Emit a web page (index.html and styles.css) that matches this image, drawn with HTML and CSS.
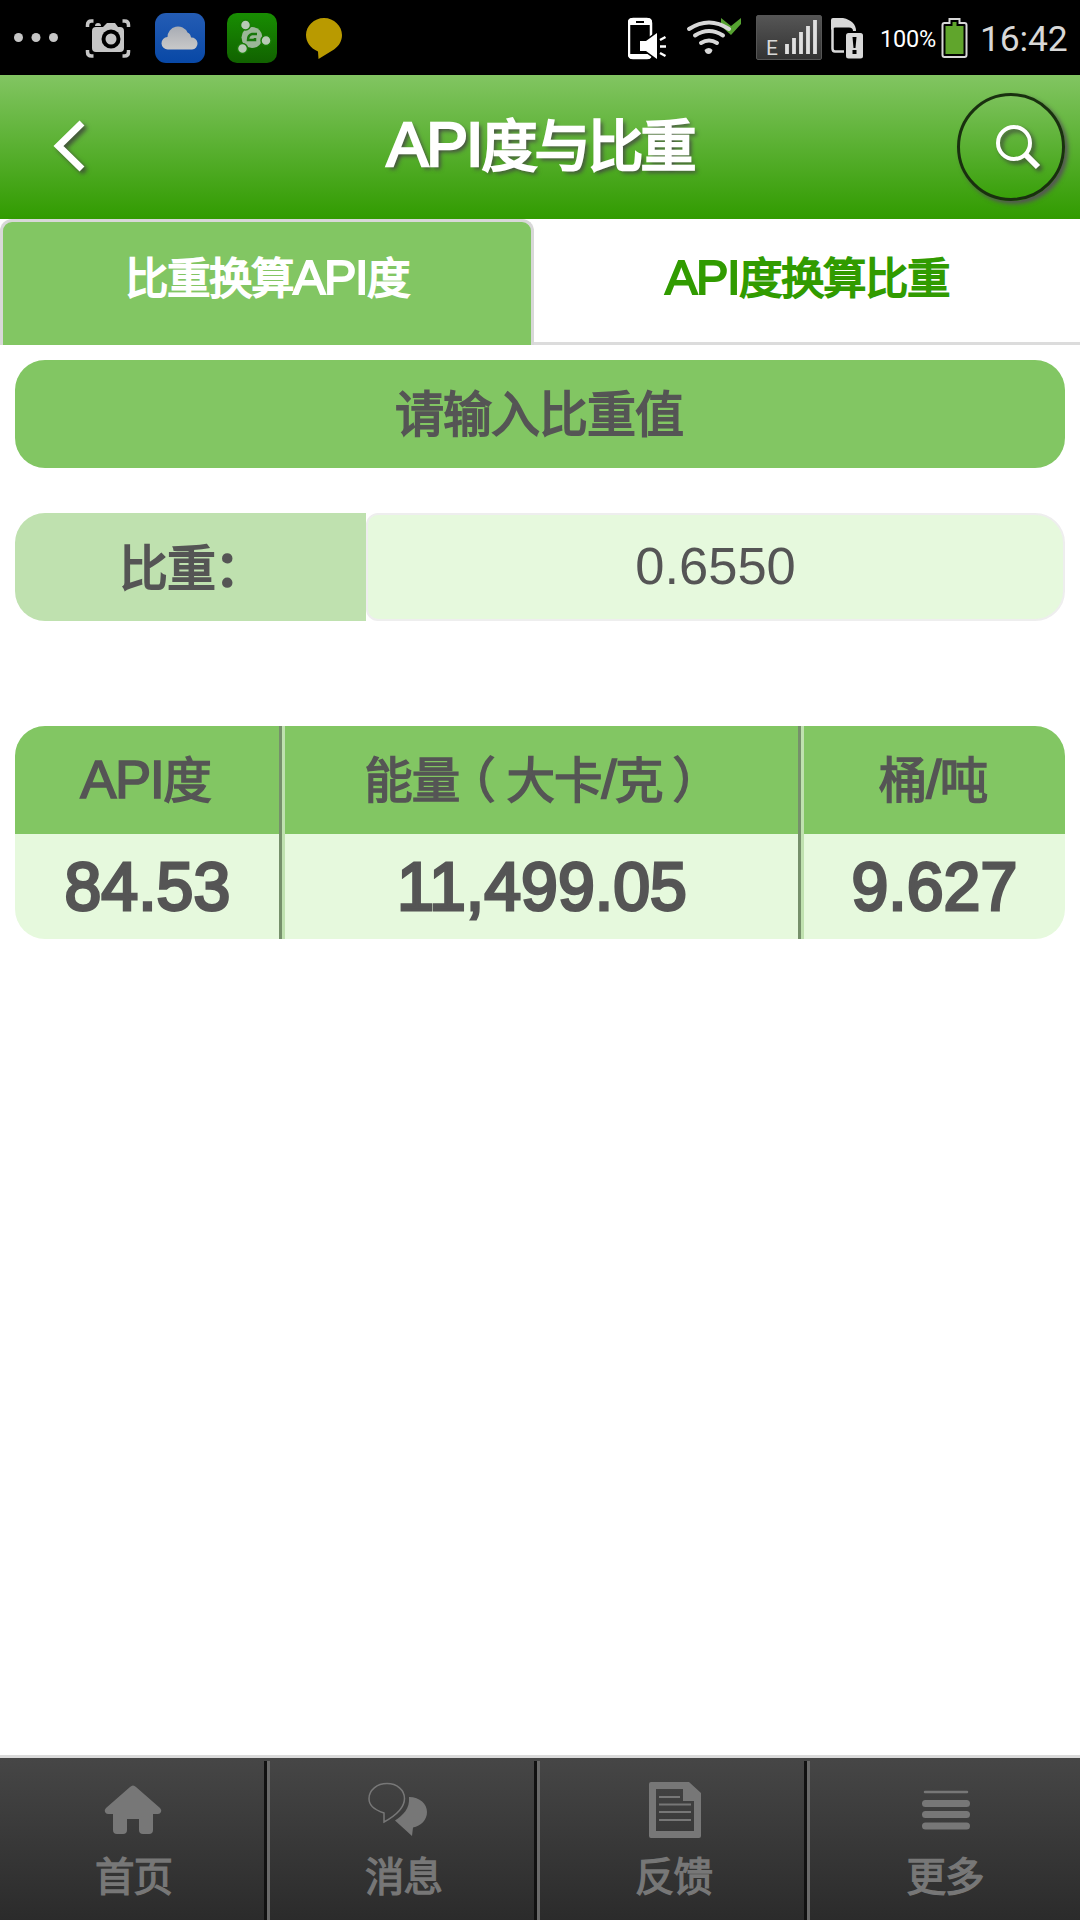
FILE: index.html
```
<!DOCTYPE html>
<html lang="zh-CN">
<head>
    <meta charset="UTF-8">
    <title>API度与比重</title>
    <link rel="stylesheet" href="styles.css">
</head>
<body>
    <div class="page">
        <!-- 状态栏 -->
        <div class="status">
            <div class="status-left">
                <svg width="46" height="75" viewBox="13 0 46 75" fill="#c6c6c6">
                    <circle cx="18.5" cy="37.5" r="4.5"/><circle cx="36" cy="37.5" r="4.5"/><circle cx="53.5" cy="37.5" r="4.5"/>
                </svg>
                <svg width="46" height="75" viewBox="85 0 46 75">
                    <path d="M87.500 27v-2q0-4 4-4h2M122.500 21h2q4 0 4 4v2M87.500 50v2q0 4 4 4h2M122.500 56h2q4 0 4-4v-2" fill="none" stroke="#c6c6c6" stroke-width="3.500"/>
                    <path d="M95 26q0-3 3-3t3 3z" fill="#c6c6c6"/>
                    <path d="M96 27h7l4-4h8l3 4h2q4 0 4 4v17q0 4-4 4h-24q-4 0-4-4V31q0-4 4-4z" fill="#c6c6c6"/>
                    <circle cx="111" cy="39" r="9.500" fill="#000"/><circle cx="111" cy="39" r="5.500" fill="#c6c6c6"/>
                </svg>
                <svg width="50" height="75" viewBox="155 0 50 75">
                    <defs>
                        <linearGradient id="blue" x2="0" y2="1"><stop stop-color="#245cb4"/><stop offset="1" stop-color="#0848a6"/></linearGradient>
                        <linearGradient id="cloud" x2="0" y2="1"><stop stop-color="#a8acb4"/><stop offset="1" stop-color="#c9c9c9"/></linearGradient>
                    </defs>
                    <rect x="155" y="13" width="50" height="50" rx="11" fill="url(#blue)"/>
                    <path d="M168 49.500a6 6 0 0 1-.5-12.500a10.500 10.500 0 0 1 20-4.500q3 1 3.500 5a6 6 0 0 1 1 12z" fill="url(#cloud)"/>
                </svg>
                <svg width="50" height="75" viewBox="227 0 50 75">
                    <defs>
                        <linearGradient id="green" x2="0" y2="1"><stop stop-color="#188d02"/><stop offset="1" stop-color="#116200"/></linearGradient>
                    </defs>
                    <rect x="227" y="13" width="50" height="50" rx="10" fill="url(#green)"/>
                    <circle cx="252" cy="37.500" r="10.500" fill="#9bb797"/>
                    <path d="M257 34h-5q-4 1-4 6h7v-2" fill="none" stroke="#17780a" stroke-width="2.500"/>
                    <g fill="#b7cab5" stroke="#187d06" stroke-width="1.500">
                        <circle cx="245.500" cy="25" r="5"/><circle cx="266" cy="40.500" r="5"/><circle cx="242.500" cy="48.500" r="5"/>
                    </g>
                </svg>
                <svg width="37" height="75" viewBox="305 0 37 75">
                    <path d="M318 51.500C310 48 306 42 306 35c0-9 8-17 18-17s18 8 18 17c0 6-3 11-8 14.500l-15.500 9.500z" fill="#b99a00"/>
                </svg>
            </div>
            <div class="status-right">
                <svg width="39" height="75" viewBox="628 0 39 75">
                    <rect x="629" y="19" width="22" height="39" rx="4" fill="none" stroke="#fff" stroke-width="2.500"/>
                    <path d="M628 25v-3q0-4 4-4h16q4 0 4 4v3h-24zM628 54h24q0 5-4 5h-16q-4 0-4-5z" fill="#fff"/>
                    <path d="M636 22h8" stroke="#000" stroke-width="2"/>
                    <path d="M640 41h6l11-8v26l-11-8h-6z" fill="#fff" stroke="#000" stroke-width="3" paint-order="stroke"/>
                    <path d="M660 40l5.500-3M660 46.500h6M660 53l5.500 3" stroke="#fff" stroke-width="2.500"/>
                </svg>
                <svg width="56" height="75" viewBox="686 0 56 75">
                    <path d="M721 18l10 8 10-8v6l-10 11-10-9z" fill="#56a231"/>
                    <g fill="none" stroke="#d8d8d8" stroke-width="4" stroke-linecap="round">
                        <path d="M689 29q20-13 40 0M695 35.500q14-9 28 0M701 43q8-5 16 0"/>
                    </g>
                    <path d="M704.500 50q4.500-4 8 0-1 4-4 4t-4-4z" fill="#d8d8d8"/>
                </svg>
                <div class="signal">
                    <span>E</span>
                    <svg width="33" height="34" viewBox="0 0 33 34" stroke="#e0e0e0" stroke-width="3.800">
                        <path d="M3 34V24M10 34V18M17 34V12M24 34V6M31 34V0"/>
                    </svg>
                </div>
                <svg width="33" height="75" viewBox="831 0 33 75">
                    <path d="M844 51.500h-9q-2.500 0-2.500-3V26" fill="none" stroke="#d8d8d8" stroke-width="2.500"/>
                    <path d="M831 30V20q0-2 2-2h10q13 3 13 13h-3q0-3.500-4-3.500h-14q-2.500 0-4 2.500z" fill="#d8d8d8"/>
                    <rect x="846" y="33" width="17" height="25.500" rx="2.500" fill="#d8d8d8"/>
                    <path d="M852.500 37h4l-1 11h-2z" fill="#000"/><rect x="852.500" y="50" width="4" height="4" fill="#000"/>
                </svg>
                <span class="percent">100%</span>
                <svg width="27" height="75" viewBox="941.500 0 27 75">
                    <path d="M943 55V25q0-2 2-2h5v-4h10v4h5q2 0 2 2v30q0 2-2 2h-20q-2 0-2-2z" fill="none" stroke="#d8d8d8" stroke-width="2"/>
                    <path d="M946 54V26h7v-4h4v4h7v28z" fill="#60a52c"/>
                </svg>
                <span class="time">16:42</span>
            </div>
        </div>

        <!-- 标题栏 -->
        <div class="header">
            <a href="#" class="back">
                <svg width="40" height="58" viewBox="-1 0 40 58"><path d="M30 5L6.500 28L30 51" fill="none" stroke="#fff" stroke-width="7"/></svg>
            </a>
            <h1><span class="en">API</span>度与比重</h1>
            <a href="#" class="search">
                <svg width="50" height="50" viewBox="0 -1 50 50" fill="none" stroke="#fff"><circle cx="22" cy="21" r="16" stroke-width="4"/><path d="M33 32L46 45" stroke-width="6"/></svg>
            </a>
        </div>

        <div class="tabs">
            <a href="#" class="current">比重换算<span class="en">API</span>度</a>
            <a href="#"><span class="en">API</span>度换算比重</a>
        </div>

        <div class="content">
            <div class="tip">请输入比重值</div>
            <div class="field">
                <label for="gravity">比重<span class="colon">：</span></label>
                <input type="text" id="gravity" value="0.6550">
            </div>
            <div class="result">
                <div class="row head">
                    <div><span class="en">API</span>度</div>
                    <div>能量<span class="open">（</span>大卡<span class="en">/</span>克<span class="close">）</span></div>
                    <div>桶<span class="en">/</span>吨</div>
                </div>
                <div class="row data">
                    <div><b>84.53</b></div>
                    <div><b>11,499.05</b></div>
                    <div><b>9.627</b></div>
                </div>
            </div>
        </div>

        <!-- 底部导航 -->
        <div class="nav">
            <a href="#">
                <svg width="60" height="60" viewBox="1 0 60 60" fill="#777">
                    <path d="M27 6q3-3 6 0l24 21q2 2 1 4t-3 2h-5v16q0 4-4 4h-6q-4 0-4-4V38H24v11q0 4-4 4h-6q-4 0-4-4V33H5q-2 0-3-2t1-4z"/>
                </svg>
                首页
            </a>
            <a href="#">
                <svg class="chat" width="60" height="60" viewBox="7 1 60 60">
                    <path d="M17 33C6 29 2 25 2 18.500C2 10 10 3.500 20 3.500S37.500 10 37.500 18.500C37.500 28 28 36 17 42z" fill="none" stroke="#777" stroke-width="1.500"/>
                    <path d="M42 17c11 0 18 7 18 15 0 8-6 14-14 15.500l-1 8.500L28 40.500C36 35 43 29 42 17z" fill="#777"/>
                </svg>
                消息
            </a>
            <a href="#">
                <svg width="60" height="60" viewBox="0 0 60 60">
                    <path fill-rule="evenodd" d="M7 1h38l12 11v43q0 2-2 2H7q-2 0-2-2V3q0-2 2-2zM12 8v42h38V20H39V8z" fill="#777"/>
                    <path d="M15 16h21M15 23.500h32M15 31h32M15 39h32" stroke="#777" stroke-width="2"/>
                </svg>
                反馈
            </a>
            <a href="#">
                <svg width="60" height="60" viewBox="-1 1 60 60" stroke="#777" stroke-linecap="round">
                    <path d="M9 12h42" stroke-width="2.500"/>
                    <path d="M9.500 23.500h41M9.500 34.500h41M9.500 46h41" stroke-width="7"/>
                </svg>
                更多
            </a>
        </div>
    </div>
</body>
</html>
```
FILE: styles.css
```
* {
    margin: 0;
    padding: 0;
    box-sizing: border-box;
}
body {
    background-color: #fff;
    font-family: "Noto Sans CJK SC", sans-serif;
    color: #555;
}
a {
    color: inherit;
    text-decoration: none;
}
svg {
    display: block;
    flex-shrink: 0;
}
.page {
    width: 1080px;
    height: 1920px;
    display: flex;
    flex-direction: column;
    overflow: hidden;
}
.en {
    font-family: "Liberation Sans", sans-serif;
    font-size: 1.12em;
    letter-spacing: -1.5px;
}

/* 状态栏 */
.status {
    height: 75px;
    padding: 0 12px 0 13px;
    display: flex;
    justify-content: space-between;
    background-color: #000;
    color: #d8d8d8;
    font-family: Roboto, sans-serif;
}
.status-left, .status-right {
    display: flex;
    align-items: center;
}
.status-left svg + svg {
    margin-left: 22px;
}
.status-left svg:nth-child(2) {
    margin-left: 26px;
}
.status-left svg:nth-child(3) {
    margin-left: 24px;
}
.status-left svg:nth-child(5) {
    margin-left: 28px;
}
.status-right {
    flex-shrink: 0;
}
.signal {
    width: 66px;
    height: 45px;
    margin: 0 9px 0 14px;
    padding: 4px 4px 5px 9px;
    display: flex;
    align-items: flex-end;
    justify-content: space-between;
    border: 1px solid #555;
    border-radius: 2px;
    background-image: linear-gradient(#555, #333);
}
.signal span {
    font-size: 21px;
    line-height: 12px;
}
.status-right svg + svg {
    margin-left: 19px;
}
.percent {
    margin: 3px 6px 0 16px;
    width: 55px;
    font-size: 23.5px;
    letter-spacing: -0.2px;
    color: #fff;
}
.time {
    width: 88px;
    margin: 3px 0 0 12px;
    font-size: 35.5px;
    letter-spacing: -0.2px;
}

/* 标题栏 */
.header {
    height: 144px;
    padding: 0 15px 0 51px;
    display: grid;
    grid-template-columns: 108px 1fr 108px;
    align-items: center;
    background-image: linear-gradient(#82c562, #319b00);
    color: #fff;
}
.header svg {
    filter: drop-shadow(3px 3px 2px rgba(60, 60, 60, .8));
}
.header h1 {
    padding-right: 36px;
    padding-bottom: 8px;
    text-align: center;
    font-size: 56px;
    font-weight: 400;
    line-height: 80px;
    letter-spacing: -3px;
    -webkit-text-stroke: 2.5px #fff;
    text-shadow: 3px 3px 4px #444;
}
.header h1 .en {
    letter-spacing: -2px;
}
.search {
    width: 108px;
    height: 108px;
    padding: 0 0 2px 12px;
    display: flex;
    align-items: center;
    justify-content: center;
    border: 3px solid #19300f;
    border-radius: 50%;
    box-shadow: 3px 3px 4px #555;
    background-image: linear-gradient(#7bc15a, #39a00a);
}

.tabs {
    height: 126px;
    display: flex;
}
.tabs a {
    flex: 1;
    text-align: center;
    font-size: 43.5px;
    line-height: 114px;
    letter-spacing: -1.5px;
    color: #319b00;
    -webkit-text-stroke: 1.8px currentColor;
    border-bottom: 3px solid #dcdcdc;
}
.tabs .current {
    flex: 0 0 534px;
    border: 3px solid #d8d8d8;
    border-bottom: 0;
    border-radius: 12px 12px 0 0;
    background-color: #82c663;
    color: #fff;
    line-height: 108px;
}

.content {
    flex: 1;
    padding: 15px 15px 0;
}
.tip {
    height: 108px;
    padding-right: 2px;
    border-radius: 30px;
    background-color: #82c663;
    text-align: center;
    font-size: 49px;
    line-height: 102px;
    letter-spacing: -1px;
    -webkit-text-stroke: 1.8px #555;
}
.field {
    height: 108px;
    margin-top: 45px;
    display: flex;
}
.field label {
    width: 351px;
    padding-left: 104px;
    border-radius: 30px 0 0 30px;
    background-color: #bfe1af;
    font-size: 49px;
    line-height: 103px;
    letter-spacing: -1px;
    -webkit-text-stroke: 1.8px #555;
}
.colon {
    -webkit-text-stroke-width: 3px;
}
.field input {
    width: 699px;
    padding-bottom: 3px;
    border: 2px solid #eee;
    border-radius: 12px 30px 30px 12px;
    background-color: #e6f9dd;
    text-align: center;
    font-family: "Liberation Sans", sans-serif;
    font-size: 52.5px;
    color: #555;
}

/* 结果表 */
.result {
    height: 213px;
    margin-top: 105px;
    border-radius: 30px;
    overflow: hidden;
}
.row {
    display: grid;
    grid-template-columns: 267px 519px 264px;
    text-align: center;
}
.row div {
    border-left: 3px solid #bfe1af;
    border-right: 3px solid #76906b;
    white-space: nowrap;
}
.row div:first-child {
    border-left: 0;
}
.row div:last-child {
    border-right: 0;
}
.head {
    height: 108px;
    background-color: #82c663;
    font-size: 48.5px;
    line-height: 102px;
    letter-spacing: -1px;
    -webkit-text-stroke: 1.6px #555;
}
.head div {
    padding-right: 3px;
}
/* 全角括号压成半角宽度，再用外边距居中 */
.open, .close {
    font-feature-settings: "halt";
}
.open {
    margin: 0 12px;
}
.close {
    margin: 0 20px 0 10px;
}
.data {
    height: 105px;
    background-color: #e6f9dd;
    font-family: "Liberation Sans", sans-serif;
    font-size: 69px;
    line-height: 105px;
}
.data b {
    display: inline-block;
    font-weight: 400;
    transform: scaleX(.96);
    -webkit-text-stroke: 3px #555;
}

/* 底部导航 */
.nav {
    height: 165px;
    display: grid;
    grid-template-columns: repeat(4, 1fr);
    border-top: 3px solid #dadada;
    background-image: linear-gradient(#464646, #2b2b2b);
    color: #777;
}
.nav a {
    margin-top: 3px;
    padding-top: 20px;
    display: flex;
    flex-direction: column;
    align-items: center;
    border-right: 3px solid #696969;
    box-shadow: inset -3px 0 0 #111;
    font-size: 39.5px;
    line-height: 65px;
    letter-spacing: -1px;
    -webkit-text-stroke: 1.3px #777;
}
.nav .chat {
    overflow: visible;
}
.nav a:last-child {
    border-right: 0;
    box-shadow: none;
}
```
